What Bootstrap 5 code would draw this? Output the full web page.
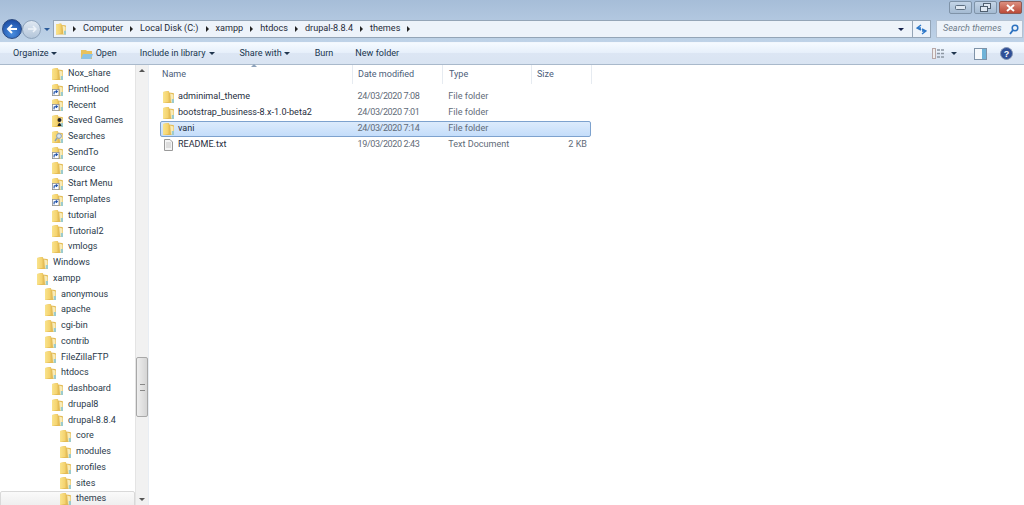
<!DOCTYPE html>
<html lang="en">
<head>
    <meta charset="UTF-8">
    <title>themes</title>
    <link href="https://cdn.jsdelivr.net/npm/bootstrap@5.3.0/dist/css/bootstrap.min.css" rel="stylesheet">
    <style>
        html, body { height: 505px; overflow: hidden; }
        body { width: 1024px; background: #fff; font-family: Roboto, "Noto Sans", sans-serif; font-size: 9.05px; color: #2b3a4a; }
        .chrome { height: 42px; background: linear-gradient(#a6bdd8, #bfd3e8); }
        .title-row { height: 17px; padding: 1px 2px 0 0; gap: 2px; }
        .win-btn { width: 23px; height: 13px; border: 1px solid #7f93a8; border-radius: 2px; background: linear-gradient(#c4d5e7, #a4bad2); }
        .win-btn.win-close { background: linear-gradient(#dc8f80, #bb4a38); border-color: #8a5a55; }
        .addr-row { height: 24px; padding-left: 2px; }
        .nav-back { width: 20px; height: 20px; border-radius: 50%; background: radial-gradient(circle at 50% 75%, #4a8fe0, #123f98); border: 1px solid #2b4a80; }
        .nav-fwd { width: 19px; height: 19px; border-radius: 50%; background: linear-gradient(#dfe8f2, #b4c6da); border: 1px solid #8ea3bb; }
        .hist-drop { width: 0; height: 0; margin-left: 3px; border-top: 3px solid #2a5a9a; border-left: 3px solid transparent; border-right: 3px solid transparent; }
        .addr-box { width: 878px; height: 18px; margin-left: 3px; background: #edf3fa; border: 1px solid #94a5b7; padding-left: 2px; color: #1e2a38; font-size: 9.1px; }
        .crumb-sep { width: 0; height: 0; border-left: 3px solid #222; border-top: 3px solid transparent; border-bottom: 3px solid transparent; margin: 0 7px 0 7px; }
        .addr-drop { width: 0; height: 0; border-top: 3px solid #14204a; border-left: 3px solid transparent; border-right: 3px solid transparent; }
        .refresh-box { width: 18px; height: 16px; border-left: 1px solid #94a5b7; }
        .search-box { width: 87px; height: 18px; margin-left: 5px; background: #edf3fa; border: 1px solid #b4c2d2; padding: 0 3px 0 6px; color: #6c7a88; font-style: italic; }
        .tool-row { height: 23px; background: linear-gradient(#f5faff 0%, #e7f0fb 45%, #dce6f4 50%, #d9e4f2 100%); border-top: 1px solid #f2f7fd; border-bottom: 1px solid #a9b9cb; color: #20364f; padding-left: 13px; }
        .tool-item { gap: 2px; }
        .tool-caret { width: 0; height: 0; border-top: 3px solid #20364f; border-left: 3.5px solid transparent; border-right: 3.5px solid transparent; }
        .tool-open { margin-left: 24px; gap: 3px; }
        .tool-lib { margin-left: 23px; gap: 4px; }
        .tool-share { margin-left: 24px; }
        .tool-burn { margin-left: 25px; }
        .tool-new { margin-left: 22px; }
        .tool-caret.view-caret { margin-left: 4px; }
        .tool-panel { margin-left: 17px; }
        .tool-help { margin: 0 11px 0 13px; }
        .pane-row { height: 440px; }
        .tree-pane { width: 135px; padding-top: 1px; overflow: hidden; }
        .tree-row { height: 15.75px; white-space: nowrap; gap: 5px; flex: none; }
        .tree-row svg { flex: none; }
        .ind-0 { padding-left: 37px; }
        .ind-1 { padding-left: 45px; }
        .ind-2 { padding-left: 52px; }
        .ind-3 { padding-left: 60px; }
        .tree-sel { background: linear-gradient(#fafafa, #eeeeee); border: 1px solid #d9d9d9; border-radius: 2px; padding-left: 59px; }
        .tree-scroll { width: 13px; background: #f1f1f1; border-left: 1px solid #e4e4e4; padding-top: 4px; }
        .scroll-up { width: 0; height: 0; margin: 0 auto; border-bottom: 3px solid #555; border-left: 3px solid transparent; border-right: 3px solid transparent; }
        .scroll-down { width: 0; height: 0; margin: 0 auto 4px; border-top: 3px solid #555; border-left: 3px solid transparent; border-right: 3px solid transparent; }
        .scroll-thumb { height: 60px; margin-top: 285px; background: linear-gradient(90deg, #eee, #d5d5d5); border: 1px solid #a8a8a8; border-radius: 2px; }
        .grip { width: 5px; height: 7px; border-top: 1px solid #888; border-bottom: 1px solid #888; }
        .files-pane { width: 876px; border-left: 1px solid #e8edf3; padding-left: 11px; }
        .list-head { height: 19px; color: #4c607a; margin-bottom: 4.5px; position: relative; }
        .sort-mark { position: absolute; left: 91px; top: -1px; width: 0; height: 0; border-bottom: 3px solid #8ea3bb; border-left: 3.5px solid transparent; border-right: 3.5px solid transparent; }
        .col-name { width: 193px; padding-left: 2px; }
        .col-date { width: 90px; padding-left: 5px; }
        .col-type { width: 89px; padding-left: 6px; }
        .col-size { width: 60px; padding-left: 5px; }
        .list-head > div { height: 19px; padding-top: 1px; border-right: 1px solid #e6ebf1; display: flex; align-items: center; }
        .file-row { height: 16px; width: 431px; border: 1px solid transparent; border-radius: 2px; color: #5f6b78; }
        .file-row .col-name { color: #1f2e40; gap: 4px; display: flex; align-items: center; width: 192px; padding-left: 2px; }
        .file-row .col-date { letter-spacing: -0.4px; }
        .file-row .col-size { text-align: right; padding-right: 3px; width: 59px; }
        .file-sel { background: linear-gradient(#dcebfc, #c4ddfa); border-color: #7da2ce; }
    </style>
</head>
<body>
<svg width="0" height="0" class="position-absolute">
    <defs>
        <linearGradient id="fold" x1="0" y1="0" x2="1" y2="0">
            <stop offset="0" stop-color="#f9e38c"/><stop offset=".6" stop-color="#f5d470"/><stop offset="1" stop-color="#dcb24c"/>
        </linearGradient>
        <symbol id="folder" viewBox="0 0 11 12">
            <path d="M0 1 L5 0 L6 1.5 L10 2 Q11 2 11 3 L11 12 L0 12 Z" fill="#e3bb55"/>
            <path d="M0 1 L6 0 L7.5 10.5 L0 12 Z" fill="url(#fold)"/>
            <path d="M7.2 2.5 L10.5 3.5 L10.5 11.5 L8 11.5 Z" fill="#f8ebb8"/>
            <path d="M8.8 8 L11 8 L11 12 L8.8 12 Z" fill="#9ccbce"/>
        </symbol>
        <symbol id="shortcut" viewBox="0 0 11 12">
            <use href="#folder"/>
            <rect x=".4" y="5.4" width="6.6" height="6.2" fill="#fff" stroke="#8a8f96" stroke-width=".8"/>
            <path d="M2 10.4 L2.2 8 L5 7.4 M3.8 6.6 L5.3 7.4 L4.1 8.8" fill="none" stroke="#1c4fa8" stroke-width="1.1"/>
        </symbol>
    </defs>
</svg>

<div class="chrome">
    <div class="title-row d-flex justify-content-end">
        <div class="win-btn d-flex align-items-center justify-content-center"><svg width="11" height="5"><rect x=".5" y=".5" width="10" height="4" rx="1" fill="#dfe8f2" stroke="#5d6e80"/></svg></div>
        <div class="win-btn d-flex align-items-center justify-content-center"><svg width="11" height="9"><rect x="3.5" y=".5" width="7" height="5" fill="#dfe8f2" stroke="#4f5f70"/><rect x=".5" y="3.5" width="7" height="5" fill="#dfe8f2" stroke="#4f5f70"/></svg></div>
        <div class="win-btn win-close d-flex align-items-center justify-content-center"><svg width="9" height="8"><path d="M1 1 L8 7 M8 1 L1 7" stroke="#fff" stroke-width="2"/></svg></div>
    </div>
    <div class="addr-row d-flex align-items-center">
        <div class="nav-back d-flex align-items-center justify-content-center"><svg width="12" height="10"><path d="M6 1 L2 5 L6 9 M2 5 L11 5" fill="none" stroke="#fff" stroke-width="2"/></svg></div>
        <div class="nav-fwd d-flex align-items-center justify-content-center"><svg width="10" height="8"><path d="M6 1 L9 4 L6 7 M1 4 L9 4" fill="none" stroke="#eef3f9" stroke-width="1.5"/></svg></div>
        <span class="hist-drop"></span>
        <div class="addr-box d-flex align-items-center">
            <svg width="10" height="12"><use href="#folder"/></svg>
            <span class="crumb-sep"></span>Computer
            <span class="crumb-sep"></span>Local Disk (C:)
            <span class="crumb-sep"></span>xampp
            <span class="crumb-sep"></span>htdocs
            <span class="crumb-sep"></span>drupal-8.8.4
            <span class="crumb-sep"></span>themes
            <span class="crumb-sep"></span>
            <span class="addr-drop ms-auto me-2"></span>
            <span class="refresh-box d-flex align-items-center justify-content-center"><svg width="11" height="11"><path d="M5 1 L1 4 L5 6 M1 4 L5 4 M6 10 L10 7 L6 5 M10 7 L6 7" fill="none" stroke="#2e78c8" stroke-width="1.4"/></svg></span>
        </div>
        <div class="search-box d-flex align-items-center justify-content-between">Search themes
            <svg width="10" height="11"><circle cx="6" cy="4" r="2.8" fill="none" stroke="#2d72c0" stroke-width="1.5"/><path d="M4 6 L1 10" stroke="#2d72c0" stroke-width="1.8"/></svg>
        </div>
    </div>
</div>

<div class="tool-row d-flex align-items-center">
    <div class="tool-item d-flex align-items-center">Organize <span class="tool-caret"></span></div>
    <div class="tool-item tool-open d-flex align-items-center">
        <svg width="12" height="12"><path d="M0 2 H5 L6 3 H11 V11 H0 Z" fill="#e8c25e"/><path d="M2 6 H12 L10 11 H0 Z" fill="#8cc3e6"/></svg>Open
    </div>
    <div class="tool-item tool-lib d-flex align-items-center">Include in library <span class="tool-caret"></span></div>
    <div class="tool-item tool-share d-flex align-items-center">Share with <span class="tool-caret"></span></div>
    <div class="tool-item tool-burn d-flex align-items-center">Burn</div>
    <div class="tool-item tool-new d-flex align-items-center">New folder</div>
    <div class="tool-item d-flex align-items-center ms-auto">
        <svg width="13" height="11"><rect x=".5" y=".5" width="3" height="10" fill="#eee" stroke="#b8a8a8"/><path d="M5 2 H12 M5 5.5 H12 M5 9 H12" stroke="#8c96a2" stroke-width="1.5" stroke-dasharray="3 1"/></svg>
        <span class="tool-caret view-caret"></span>
    </div>
    <div class="tool-item tool-panel d-flex"><svg width="13" height="12"><rect x=".5" y=".5" width="12" height="11" fill="#f6f9fc" stroke="#7f93a8"/><rect x="8" y="1" width="4" height="10" fill="#6fb3d8"/></svg></div>
    <div class="tool-item tool-help d-flex"><svg width="13" height="13"><circle cx="6.5" cy="6.5" r="6" fill="#2f4f96" stroke="#8797b4"/><text x="6.5" y="10" font-size="9" font-weight="700" fill="#fff" text-anchor="middle" font-family="Liberation Sans">?</text></svg></div>
</div>

<div class="pane-row d-flex">
    <div class="tree-pane d-flex flex-column">
        <div class="tree-row ind-2 d-flex align-items-center"><svg width="11" height="12"><use href="#folder"/></svg>Nox_share</div>
        <div class="tree-row ind-2 d-flex align-items-center"><svg width="11" height="12"><use href="#shortcut"/></svg>PrintHood</div>
        <div class="tree-row ind-2 d-flex align-items-center"><svg width="11" height="12"><use href="#shortcut"/></svg>Recent</div>
        <div class="tree-row ind-2 d-flex align-items-center"><svg width="11" height="12"><use href="#folder"/><circle cx="7.5" cy="5" r="2" fill="#222"/><path d="M5.5 11 Q7.5 5 9.5 11 Z" fill="#222"/></svg>Saved Games</div>
        <div class="tree-row ind-2 d-flex align-items-center"><svg width="11" height="12"><use href="#folder"/><circle cx="7" cy="5" r="2.4" fill="#d8e4ee" stroke="#8aa0b4"/><path d="M5 7 L3 10" stroke="#8aa0b4" stroke-width="1.4"/></svg>Searches</div>
        <div class="tree-row ind-2 d-flex align-items-center"><svg width="11" height="12"><use href="#shortcut"/></svg>SendTo</div>
        <div class="tree-row ind-2 d-flex align-items-center"><svg width="11" height="12"><use href="#folder"/></svg>source</div>
        <div class="tree-row ind-2 d-flex align-items-center"><svg width="11" height="12"><use href="#shortcut"/></svg>Start Menu</div>
        <div class="tree-row ind-2 d-flex align-items-center"><svg width="11" height="12"><use href="#shortcut"/></svg>Templates</div>
        <div class="tree-row ind-2 d-flex align-items-center"><svg width="11" height="12"><use href="#folder"/></svg>tutorial</div>
        <div class="tree-row ind-2 d-flex align-items-center"><svg width="11" height="12"><use href="#folder"/></svg>Tutorial2</div>
        <div class="tree-row ind-2 d-flex align-items-center"><svg width="11" height="12"><use href="#folder"/></svg>vmlogs</div>
        <div class="tree-row ind-0 d-flex align-items-center"><svg width="11" height="12"><use href="#folder"/></svg>Windows</div>
        <div class="tree-row ind-0 d-flex align-items-center"><svg width="11" height="12"><use href="#folder"/></svg>xampp</div>
        <div class="tree-row ind-1 d-flex align-items-center"><svg width="11" height="12"><use href="#folder"/></svg>anonymous</div>
        <div class="tree-row ind-1 d-flex align-items-center"><svg width="11" height="12"><use href="#folder"/></svg>apache</div>
        <div class="tree-row ind-1 d-flex align-items-center"><svg width="11" height="12"><use href="#folder"/></svg>cgi-bin</div>
        <div class="tree-row ind-1 d-flex align-items-center"><svg width="11" height="12"><use href="#folder"/></svg>contrib</div>
        <div class="tree-row ind-1 d-flex align-items-center"><svg width="11" height="12"><use href="#folder"/></svg>FileZillaFTP</div>
        <div class="tree-row ind-1 d-flex align-items-center"><svg width="11" height="12"><use href="#folder"/></svg>htdocs</div>
        <div class="tree-row ind-2 d-flex align-items-center"><svg width="11" height="12"><use href="#folder"/></svg>dashboard</div>
        <div class="tree-row ind-2 d-flex align-items-center"><svg width="11" height="12"><use href="#folder"/></svg>drupal8</div>
        <div class="tree-row ind-2 d-flex align-items-center"><svg width="11" height="12"><use href="#folder"/></svg>drupal-8.8.4</div>
        <div class="tree-row ind-3 d-flex align-items-center"><svg width="11" height="12"><use href="#folder"/></svg>core</div>
        <div class="tree-row ind-3 d-flex align-items-center"><svg width="11" height="12"><use href="#folder"/></svg>modules</div>
        <div class="tree-row ind-3 d-flex align-items-center"><svg width="11" height="12"><use href="#folder"/></svg>profiles</div>
        <div class="tree-row ind-3 d-flex align-items-center"><svg width="11" height="12"><use href="#folder"/></svg>sites</div>
        <div class="tree-row ind-3 tree-sel d-flex align-items-center"><svg width="11" height="12"><use href="#folder"/></svg>themes</div>
    </div>
    <div class="tree-scroll d-flex flex-column">
        <div class="scroll-up"></div>
        <div class="scroll-thumb d-flex align-items-center justify-content-center"><div class="grip"></div></div>
        <div class="scroll-down mt-auto"></div>
    </div>
    <div class="files-pane">
        <div class="list-head d-flex">
            <span class="sort-mark"></span>
            <div class="col-name">Name</div>
            <div class="col-date">Date modified</div>
            <div class="col-type">Type</div>
            <div class="col-size">Size</div>
        </div>
        <div class="file-row d-flex align-items-center">
            <div class="col-name"><svg width="11" height="12"><use href="#folder"/></svg>adminimal_theme</div>
            <div class="col-date">24/03/2020 7:08</div>
            <div class="col-type">File folder</div>
            <div class="col-size"></div>
        </div>
        <div class="file-row d-flex align-items-center">
            <div class="col-name"><svg width="11" height="12"><use href="#folder"/></svg>bootstrap_business-8.x-1.0-beta2</div>
            <div class="col-date">24/03/2020 7:01</div>
            <div class="col-type">File folder</div>
            <div class="col-size"></div>
        </div>
        <div class="file-row file-sel d-flex align-items-center">
            <div class="col-name"><svg width="11" height="12"><use href="#folder"/></svg>vani</div>
            <div class="col-date">24/03/2020 7:14</div>
            <div class="col-type">File folder</div>
            <div class="col-size"></div>
        </div>
        <div class="file-row d-flex align-items-center">
            <div class="col-name"><svg width="11" height="12"><path d="M1.5 .5 H7 L9.5 3 V11.5 H1.5 Z" fill="#f4f4f4" stroke="#9a9a9a"/><path d="M3 4 H8 M3 6 H8 M3 8 H8" stroke="#c6c6c6"/></svg>README.txt</div>
            <div class="col-date">19/03/2020 2:43</div>
            <div class="col-type">Text Document</div>
            <div class="col-size">2 KB</div>
        </div>
    </div>
</div>

<script src="https://cdn.jsdelivr.net/npm/bootstrap@5.3.0/dist/js/bootstrap.bundle.min.js"></script>
</body>
</html>
